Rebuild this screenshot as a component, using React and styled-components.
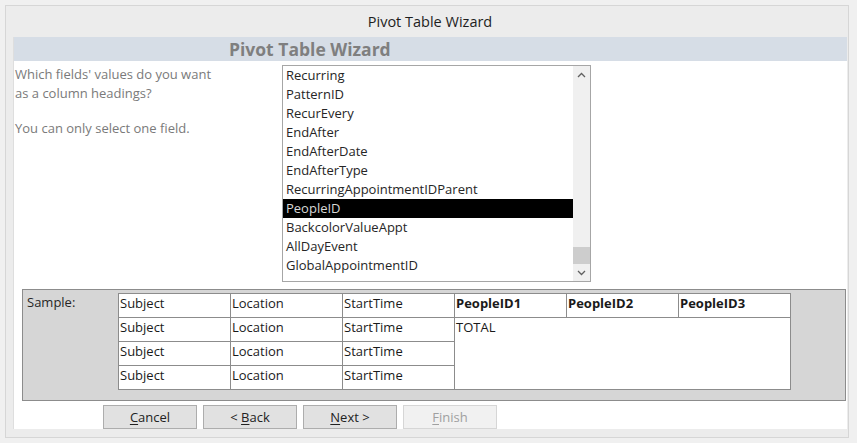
import React from "react";
import styled, { createGlobalStyle } from "styled-components";

const GlobalStyle = createGlobalStyle`
  html, body {
    margin: 0;
    padding: 0;
    background: #f0f0f0;
    font-family: "Open Sans", "Noto Sans", sans-serif;
  }
`;

const Window = styled.div`
  box-sizing: border-box;
  margin: 5px 8px 0 5px;
  width: 844px;
  height: 433px;
  border: 1px solid #d6d6d6;
  background: #ececec;
  display: flex;
  flex-direction: column;
`;

const TitleBar = styled.div`
  height: 31px;
  display: flex;
  align-items: center;
  justify-content: center;
  padding-left: 6px;
  font-size: 14.5px;
  color: #1e1e1e;
`;

const Content = styled.div`
  box-sizing: border-box;
  margin: 0 1px 0 7px;
  height: 392px;
  background: #ffffff;
  border-left: 1px solid #dedede;
  display: flex;
  flex-direction: column;
`;

const HeaderBand = styled.div`
  height: 24px;
  background: #d6dde6;
  display: flex;
  align-items: center;
  padding-left: 215px;
  font-size: 17.5px;
  font-weight: 700;
  color: #7f7f7f;
`;

const Body = styled.div`
  display: flex;
  padding-top: 4px;
`;

const Instructions = styled.div`
  width: 267px;
  padding-left: 1px;
  font-size: 13px;
  line-height: 19px;
  color: #7a7a7a;
  p {
    margin: 0 0 16px 0;
  }
`;

const ListBox = styled.div`
  box-sizing: border-box;
  width: 309px;
  height: 217px;
  border: 1px solid #a6a6a6;
  display: flex;
`;

const Items = styled.div`
  flex: 1;
`;

const Item = styled.div`
  height: 19px;
  line-height: 19px;
  padding-left: 3px;
  font-size: 13px;
  color: ${(p) => (p.$selected ? "#d8d8d8" : "#262626")};
  background: ${(p) => (p.$selected ? "#000000" : "transparent")};
  white-space: nowrap;
`;

const ScrollBar = styled.div`
  width: 17px;
  background: #f0f0f0;
  display: flex;
  flex-direction: column;
  align-items: center;
`;

const Arrow = styled.div`
  height: 17px;
  width: 17px;
  display: flex;
  align-items: center;
  justify-content: center;
`;

const Track = styled.div`
  flex: 1;
  width: 17px;
  display: flex;
  flex-direction: column;
  justify-content: flex-end;
`;

const Thumb = styled.div`
  height: 17px;
  background: #cdcdcd;
`;

const SamplePanel = styled.div`
  box-sizing: border-box;
  margin: 7px 1px 0 8px;
  height: 112px;
  background: #d6d6d6;
  border: 1px solid #8c8c8c;
  display: flex;
  padding: 3px 0 0 4px;
`;

const SampleLabel = styled.div`
  width: 91px;
  font-size: 13px;
  color: #262626;
  line-height: 19px;
`;

const SampleGrid = styled.div`
  display: grid;
  grid-template-columns: repeat(6, 111px);
  grid-template-rows: repeat(4, 23px);
  gap: 1px;
  padding: 1px;
  background: #8c8c8c;
  align-self: flex-start;
`;

const Cell = styled.div`
  background: #ffffff;
  font-size: 13px;
  font-weight: ${(p) => (p.$bold ? 700 : 400)};
  color: #1a1a1a;
  padding-left: 1px;
  line-height: 19px;
  white-space: nowrap;
  overflow: hidden;
`;

const TotalCell = styled(Cell)`
  grid-column: 4 / 7;
  grid-row: 2 / 5;
`;

const ButtonRow = styled.div`
  display: flex;
  gap: 6px;
  padding: 4px 0 0 89px;
`;

const Button = styled.button`
  box-sizing: border-box;
  width: 94px;
  height: 24px;
  padding: 0;
  font-family: inherit;
  font-size: 13px;
  color: ${(p) => (p.disabled ? "#a0a0a0" : "#222222")};
  background: ${(p) => (p.disabled ? "#f1f1f1" : "#e1e1e1")};
  border: 1px solid ${(p) => (p.disabled ? "#d6d6d6" : "#adadad")};
  u {
    text-decoration-thickness: 1px;
    text-underline-offset: 2px;
  }
`;

const fields = [
  "Recurring",
  "PatternID",
  "RecurEvery",
  "EndAfter",
  "EndAfterDate",
  "EndAfterType",
  "RecurringAppointmentIDParent",
  "PeopleID",
  "BackcolorValueAppt",
  "AllDayEvent",
  "GlobalAppointmentID",
];

const Chevron = ({ up }) => (
  <svg width="9" height="6" viewBox="0 0 9 6">
    <path
      d={up ? "M1 5 L4.5 1.5 L8 5" : "M1 1 L4.5 4.5 L8 1"}
      fill="none"
      stroke="#606060"
      strokeWidth="1.3"
    />
  </svg>
);

export default function App() {
  return (
    <>
      <GlobalStyle />
      <Window>
        <TitleBar>Pivot Table Wizard</TitleBar>
        <Content>
          <HeaderBand>Pivot Table Wizard</HeaderBand>
          <Body>
            <Instructions>
              <p>
                Which fields' values do you want
                <br />
                as a column headings?
              </p>
              <p>You can only select one field.</p>
            </Instructions>
            <ListBox>
              <Items>
                {fields.map((f) => (
                  <Item key={f} $selected={f === "PeopleID"}>
                    {f}
                  </Item>
                ))}
              </Items>
              <ScrollBar>
                <Arrow>
                  <Chevron up />
                </Arrow>
                <Track>
                  <Thumb />
                </Track>
                <Arrow>
                  <Chevron />
                </Arrow>
              </ScrollBar>
            </ListBox>
          </Body>
          <SamplePanel>
            <SampleLabel>Sample:</SampleLabel>
            <SampleGrid>
              <Cell>Subject</Cell>
              <Cell>Location</Cell>
              <Cell>StartTime</Cell>
              <Cell $bold>PeopleID1</Cell>
              <Cell $bold>PeopleID2</Cell>
              <Cell $bold>PeopleID3</Cell>
              {[0, 1, 2].map((i) => (
                <React.Fragment key={i}>
                  <Cell style={{ gridColumn: 1 }}>Subject</Cell>
                  <Cell>Location</Cell>
                  <Cell>StartTime</Cell>
                </React.Fragment>
              ))}
              <TotalCell>TOTAL</TotalCell>
            </SampleGrid>
          </SamplePanel>
          <ButtonRow>
            <Button>
              <u>C</u>ancel
            </Button>
            <Button>
              &lt; <u>B</u>ack
            </Button>
            <Button>
              <u>N</u>ext &gt;
            </Button>
            <Button disabled>
              <u>F</u>inish
            </Button>
          </ButtonRow>
        </Content>
      </Window>
    </>
  );
}
